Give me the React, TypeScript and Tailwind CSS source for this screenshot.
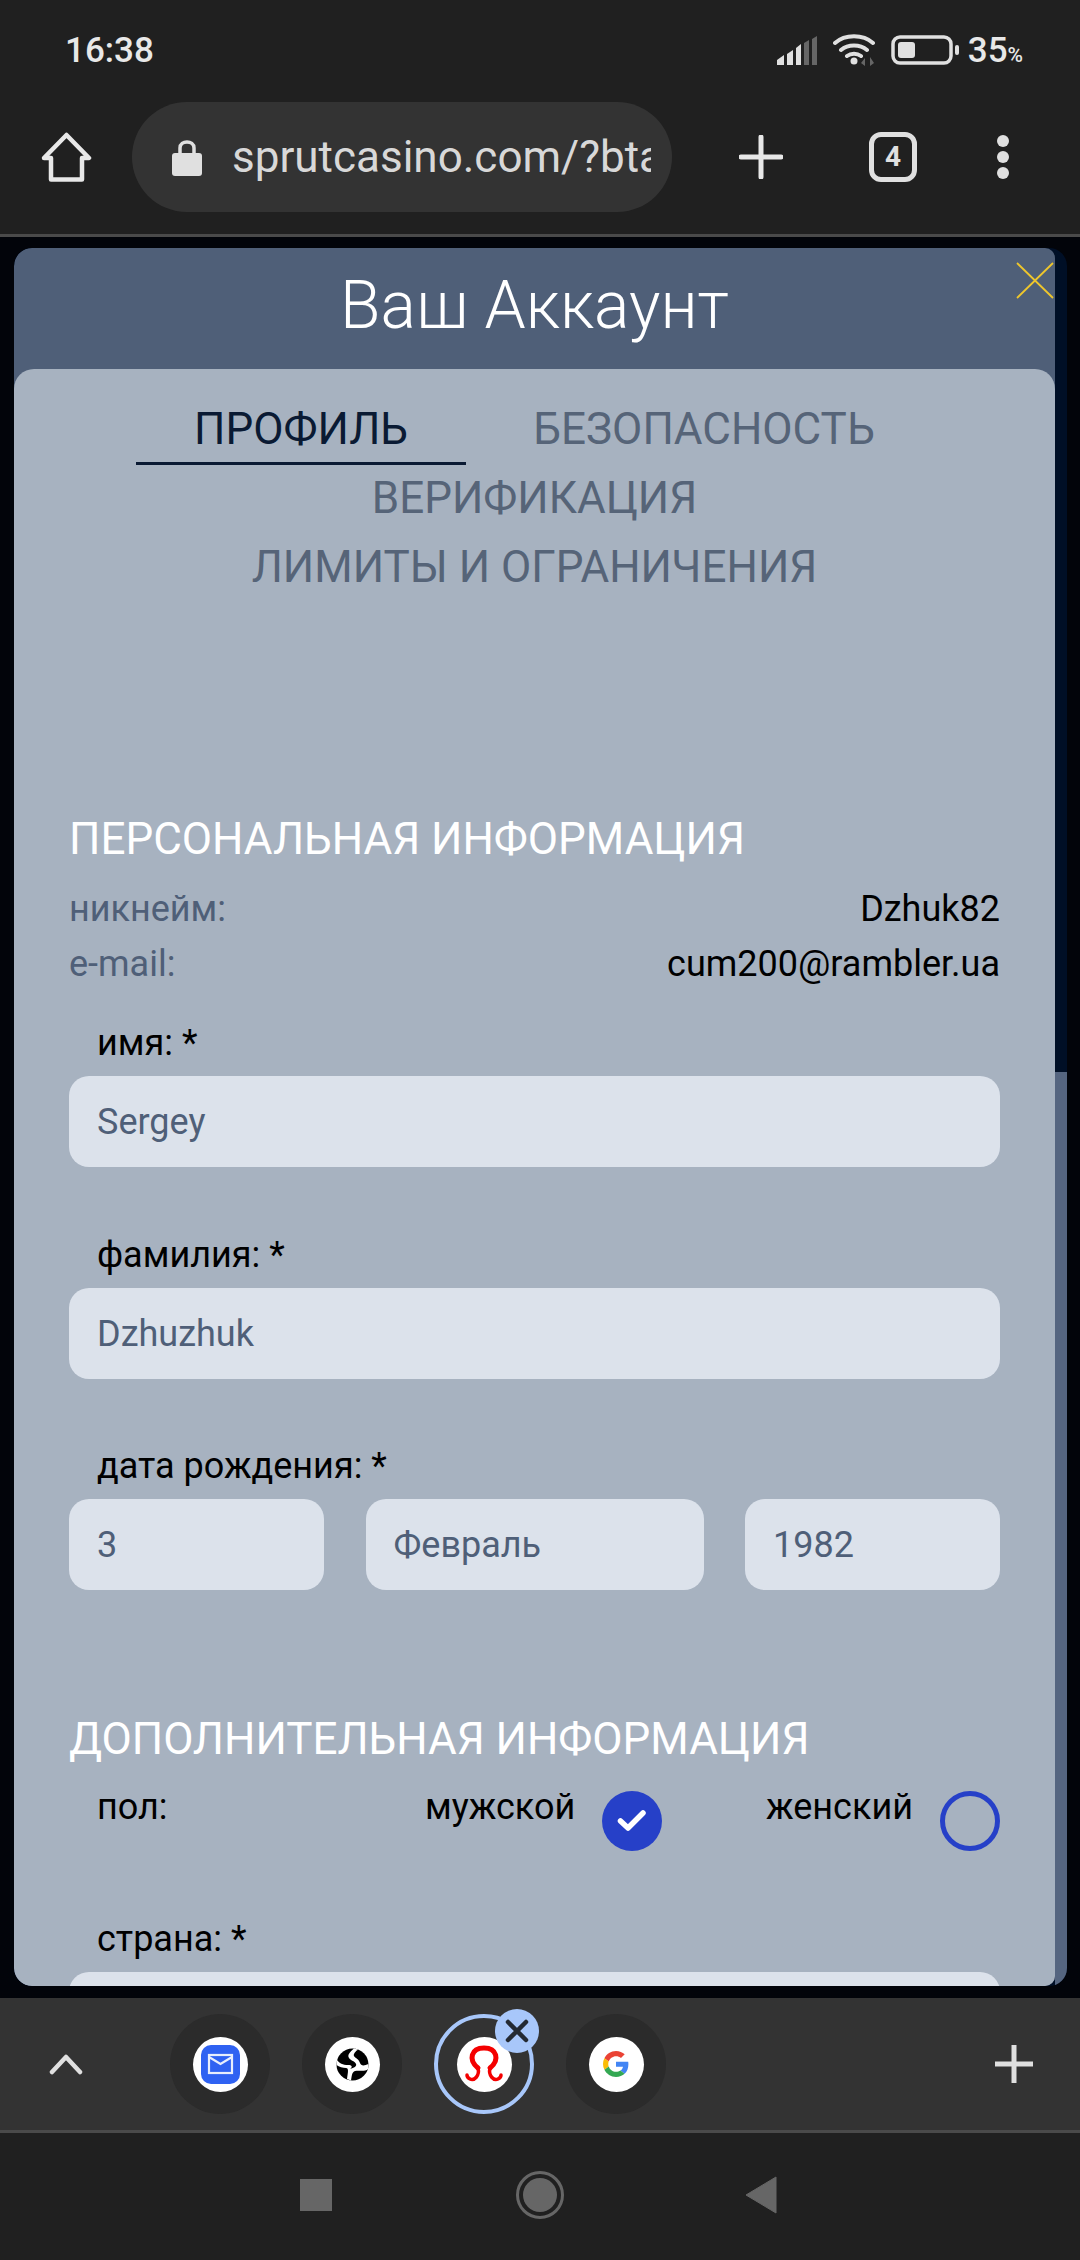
import React from "react";

const Field = ({ value, className = "" }: { value: string; className?: string }) => (
  <div className={`flex h-[91px] items-center rounded-[20px] bg-[#dce2eb] pl-[28px] text-[36px] text-[#4f5f78] ${className}`}>{value}</div>
);

const Label = ({ children, className = "" }: { children: React.ReactNode; className?: string }) => (
  <div className={`pl-[28px] text-[36px] leading-[40px] text-black ${className}`}>{children}</div>
);

const Bubble = ({ selected, children }: { selected?: boolean; children: React.ReactNode }) => (
  <div className="relative flex h-[100px] w-[100px] items-center justify-center rounded-full bg-[#2b2b2b]">
    {selected && <div className="absolute inset-0 rounded-full border-[4px] border-[#a8c7fa] bg-[#333333]" />}
    <div className="relative flex h-[55px] w-[55px] items-center justify-center rounded-full bg-white">{children}</div>
    {selected && (
      <div className="absolute right-[-5px] top-[-5px] flex h-[44px] w-[44px] items-center justify-center rounded-full bg-[#a8c7fa]">
        <svg width="24" height="24" viewBox="0 0 24 24"><path d="M3 3L21 21M21 3L3 21" stroke="#242a33" strokeWidth="4.5" strokeLinecap="round" /></svg>
      </div>
    )}
  </div>
);

export default function App() {
  return (
    <div className="flex h-[2260px] w-[1080px] flex-col overflow-hidden bg-[#202020] font-['Roboto',sans-serif]">
      {/* status bar */}
      <div className="flex h-[100px] shrink-0 items-center justify-between pl-[65px] pr-[57px]">
        <span className="mt-[3px] text-[35px] font-medium text-[#e8e8e8]">16:38</span>
        <div className="flex items-center">
          <svg width="40" height="29" viewBox="0 0 40 29" className="mr-[16px]">
            <path d="M0 29V24L7 19V29Z M10 29V18L16 14V29Z M19 29V12L24 8V29Z" fill="#e0e0e0" />
            <path d="M27 29V7L32 4V29Z M35 29V3L40 0V29Z" fill="#666666" />
          </svg>
          <svg width="42" height="32" viewBox="0 0 42 32" className="mr-[16px]">
            <path d="M2 9C12 0 30 0 40 9M8 16C15 10 27 10 34 16M14 22C18 19 24 19 28 22" fill="none" stroke="#e0e0e0" strokeWidth="4" strokeLinecap="round" />
            <circle cx="21" cy="27" r="3.500" fill="#e0e0e0" />
            <path d="M32 32V24L28 29ZM37 32V23L41 29Z" fill="#666666" />
          </svg>
          <svg width="68" height="30" viewBox="0 0 68 30" className="mr-[9px]">
            <rect x="2" y="2" width="58" height="26" rx="7" fill="none" stroke="#e0e0e0" strokeWidth="3.500" />
            <rect x="7" y="7" width="17" height="16" rx="3" fill="#e0e0e0" />
            <rect x="64" y="10" width="4" height="10" rx="2" fill="#e0e0e0" />
          </svg>
          <span className="mt-[3px] text-[35px] font-medium text-[#e8e8e8]">35<span className="text-[21px]">%</span></span>
        </div>
      </div>

      {/* browser bar */}
      <div className="flex h-[137px] shrink-0 items-start border-b-[3px] border-[#4a4a4a] pl-[41px]">
        <svg width="51" height="50" viewBox="0 0 51 50" className="mt-[32px]">
          <path d="M25.500 3L48 26H41V47.500H10V26H3Z" fill="none" stroke="#e8e8e8" strokeWidth="4.500" strokeLinejoin="round" />
        </svg>
        <div className="ml-[40px] mt-[2px] flex h-[110px] w-[540px] items-center rounded-full bg-[#333333] pl-[40px]">
          <svg width="30" height="38" viewBox="0 0 30 38" className="mr-[30px]">
            <path d="M8 17V10C8 2 22 2 22 10V17" fill="none" stroke="#e0e0e0" strokeWidth="3.500" />
            <rect x="0" y="15" width="30" height="23" rx="3" fill="#e0e0e0" />
          </svg>
          <div className="w-[419px] overflow-hidden whitespace-nowrap text-[44px] text-[#d8d8d8]">sprutcasino.com/?bta</div>
        </div>
        <svg width="44" height="44" viewBox="0 0 44 44" className="ml-[67px] mt-[35px]">
          <path d="M22 2V42M2 22H42" stroke="#e8e8e8" strokeWidth="5" strokeLinecap="round" />
        </svg>
        <div className="ml-[86px] mt-[32px] flex h-[50px] w-[48px] items-center justify-center rounded-[12px] border-[5px] border-[#e0e0e0] text-[28px] font-bold text-[#e0e0e0]">4</div>
        <div className="ml-[80px] mt-[35px] flex flex-col gap-[4px]">
          <div className="h-[12px] w-[12px] rounded-full bg-[#e0e0e0]" />
          <div className="h-[12px] w-[12px] rounded-full bg-[#e0e0e0]" />
          <div className="h-[12px] w-[12px] rounded-full bg-[#e0e0e0]" />
        </div>
      </div>

      {/* page */}
      <div className="h-[1761px] shrink-0 bg-[#02040a] pb-[12px] pl-[14px] pt-[11px]">
        <div className="relative h-[1738px] w-[1053px] overflow-hidden rounded-[18px] bg-[#000f26]">
          <div className="absolute bottom-0 right-0 top-[824px] w-[12px] bg-[#556580]" />
          <div className="relative h-full w-[1041px] overflow-hidden rounded-[18px] rounded-r-[10px] bg-[#4f5f78]">
            <svg width="38" height="38" viewBox="0 0 38 38" className="absolute right-[1px] top-[14px]">
              <path d="M1 1L37 36M37 1L1 36" stroke="#eec62c" strokeWidth="1.800" />
            </svg>
            <div className="flex h-[121px] items-center justify-center pb-[6px] text-[66px] font-light text-white">Ваш Аккаунт</div>
            <div className="h-[1617px] rounded-t-[20px] bg-[#a7b2c0] px-[55px]">
              {/* tabs */}
              <div className="flex flex-col items-center pt-[27px] text-[44px] text-[#566478]">
                <div className="ml-[67px] flex self-start leading-[66px]">
                  <div className="w-[330px] border-b-[3px] border-[#0a1a33] text-center text-[#0a1a33]">ПРОФИЛЬ</div>
                  <div className="w-[476px] text-center">БЕЗОПАСНОСТЬ</div>
                </div>
                <div className="leading-[66px]">ВЕРИФИКАЦИЯ</div>
                <div className="leading-[72px]">ЛИМИТЫ И ОГРАНИЧЕНИЯ</div>
              </div>

              <div className="mt-[211px] text-[44px] leading-[50px] text-white">ПЕРСОНАЛЬНАЯ ИНФОРМАЦИЯ</div>
              <div className="mt-[18px] flex justify-between text-[36px] leading-[55px]">
                <span className="text-[#4f5f78]">никнейм:</span>
                <span className="text-black">Dzhuk82</span>
              </div>
              <div className="flex justify-between text-[36px] leading-[55px]">
                <span className="text-[#4f5f78]">e-mail:</span>
                <span className="text-black">cum200@rambler.ua</span>
              </div>

              <Label className="mt-[31px]">имя: *</Label>
              <Field className="mt-[13px]" value="Sergey" />
              <Label className="mt-[68px]">фамилия: *</Label>
              <Field className="mt-[13px]" value="Dzhuzhuk" />
              <Label className="mt-[67px]">дата рождения: *</Label>
              <div className="mt-[13px] flex justify-between">
                <Field className="w-[255px]" value="3" />
                <Field className="w-[338px]" value="Февраль" />
                <Field className="w-[255px]" value="1982" />
              </div>

              <div className="mt-[124px] text-[44px] leading-[50px] text-white">ДОПОЛНИТЕЛЬНАЯ ИНФОРМАЦИЯ</div>
              <div className="mt-[23px] flex items-start">
                <div className="w-[356px] pl-[28px] text-[36px] leading-[40px] text-black">пол:</div>
                <div className="w-[148px] text-[36px] leading-[40px] text-black">мужской</div>
                <div className="ml-[29px] mt-[4px] flex h-[60px] w-[60px] items-center justify-center rounded-full bg-[#2640c8]">
                  <svg width="32" height="32" viewBox="0 0 32 32"><path d="M4.500 16L12 23L27 8" fill="none" stroke="white" strokeWidth="5.500" strokeLinecap="round" strokeLinejoin="round" /></svg>
                </div>
                <div className="ml-[104px] w-[145px] text-[36px] leading-[40px] text-black">женский</div>
                <div className="ml-[29px] mt-[4px] h-[60px] w-[60px] rounded-full border-[5px] border-[#2640c8]" />
              </div>
              <Label className="mt-[68px]">страна: *</Label>
              <Field className="mt-[13px]" value="" />
            </div>
          </div>
        </div>
      </div>

      {/* tab strip */}
      <div className="flex h-[135px] shrink-0 items-start border-b-[3px] border-[#4a4a4a] bg-[#333333]">
        <svg width="36" height="22" viewBox="0 0 36 22" className="ml-[48px] mt-[55px]">
          <path d="M4 19L18 4L32 19" fill="none" stroke="#e0e0e0" strokeWidth="4.500" strokeLinecap="round" strokeLinejoin="round" />
        </svg>
        <div className="ml-[86px] mt-[16px] flex gap-[32px]">
          <Bubble>
            <svg width="39" height="39" viewBox="0 0 39 39">
              <rect x="0" y="0" width="39" height="39" rx="10" fill="#2f62f2" />
              <rect x="8" y="10" width="23" height="18" fill="none" stroke="#e8eefc" strokeWidth="2.200" />
              <path d="M8 12L19.500 19L31 12" fill="none" stroke="#e8eefc" strokeWidth="2.200" />
            </svg>
          </Bubble>
          <Bubble>
            <svg width="33" height="33" viewBox="0 0 33 33">
              <circle cx="16.500" cy="16.500" r="16" fill="#000" />
              <path d="M18 0.500C14 4 11 7 13 10C15 13 19 13 20 16C21 18 18 20 14 21C17 19 16 17 12 17C7 17 3 15 1 12L0.500 17C3 19 7 20 10 20C13 20 12 24 11 31L15 32.500C16 27 16 24 19 23C23 22 29 24 32 21L32.500 16C28 18 25 18 24 15C23 11 19 10 18 8C17 6 20 3 22 1.500Z" fill="#fff" />
            </svg>
          </Bubble>
          <Bubble selected>
            <svg width="38" height="38" viewBox="0 0 38 38">
              <path d="M13 23C3 15 6 3 19 3C32 3 35 15 25 23" fill="none" stroke="#f40000" strokeWidth="5" strokeLinecap="round" />
              <path d="M13 23C15 31 9 36 5 34C3 33 2 32 2 30M25 23C23 31 29 36 33 34C35 33 36 32 36 30" fill="none" stroke="#f40000" strokeWidth="3.500" strokeLinecap="round" />
            </svg>
          </Bubble>
          <Bubble>
            <svg width="26" height="26" viewBox="0 0 48 48">
              <path fill="#EA4335" d="M24 9.500c3.500 0 6.700 1.200 9.200 3.600l6.900-6.900C35.900 2.400 30.500 0 24 0 14.600 0 6.500 5.400 2.600 13.200l8 6.200C12.500 13.700 17.800 9.500 24 9.500z" />
              <path fill="#4285F4" d="M46.900 24.500c0-1.600-.1-3.100-.4-4.500H24v9h12.900c-.6 3-2.200 5.500-4.700 7.200l7.700 6c4.500-4.200 7-10.300 7-17.700z" />
              <path fill="#FBBC05" d="M10.500 28.600c-.5-1.400-.8-3-.8-4.600s.3-3.200.8-4.600l-8-6.200C.9 16.500 0 20.100 0 24s.9 7.500 2.600 10.800l7.900-6.200z" />
              <path fill="#34A853" d="M24 48c6.500 0 11.900-2.100 15.900-5.800l-7.700-6c-2.200 1.400-4.900 2.300-8.200 2.300-6.200 0-11.500-4.200-13.400-9.900l-8 6.200C6.500 42.600 14.600 48 24 48z" />
            </svg>
          </Bubble>
        </div>
        <svg width="40" height="40" viewBox="0 0 40 40" className="ml-auto mr-[46px] mt-[46px]">
          <path d="M20 1V39M1 20H39" stroke="#e0e0e0" strokeWidth="5" />
        </svg>
      </div>

      {/* nav bar */}
      <div className="flex flex-1 items-center pb-[3px] pl-[300px]">
        <div className="h-[32px] w-[32px] bg-[#666666]" />
        <div className="ml-[184px] flex h-[48px] w-[48px] items-center justify-center rounded-full border-[3px] border-[#666666]">
          <div className="h-[34px] w-[34px] rounded-full bg-[#666666]" />
        </div>
        <svg width="32" height="38" viewBox="0 0 32 38" className="ml-[181px]">
          <path d="M31 1V37L1 19Z" fill="#666666" stroke="#666666" strokeWidth="1" strokeLinejoin="round" />
        </svg>
      </div>
    </div>
  );
}
